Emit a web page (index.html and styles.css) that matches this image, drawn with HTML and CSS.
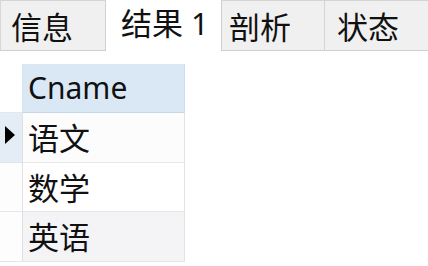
FILE: index.html
```html
<!DOCTYPE html>
<html lang="zh-CN">
<head>
<meta charset="utf-8">
<title>结果 1</title>
<link rel="stylesheet" href="styles.css">
</head>
<body>
<div class="tabs">
  <div class="tab tab-first">信息</div>
  <div class="tab tab-active">结果 1</div>
  <div class="tab tab-third">剖析</div>
  <div class="tab tab-last">状态</div>
</div>
<div class="grid">
  <div class="gutter gutter-head"></div>
  <div class="cell head">Cname</div>

  <div class="gutter gutter-current"><svg class="arrow" width="10" height="18" viewBox="0 0 10 18"><polygon points="0,0 10,9 0,18" fill="#000"/></svg></div>
  <div class="cell row-a">语文</div>

  <div class="gutter"></div>
  <div class="cell row-b">数学</div>

  <div class="gutter"></div>
  <div class="cell row-c">英语</div>
</div>
</body>
</html>
```

FILE: styles.css
```css
html, body {
  margin: 0;
  padding: 0;
  background: #ffffff;
}
body {
  font-family: "Noto Sans", "Noto Sans CJK SC", sans-serif;
  font-size: 31px;
  color: #111111;
  width: 428px;
  height: 266px;
  overflow: hidden;
}
.tabs {
  display: flex;
  height: 51px;
}
.tab {
  box-sizing: border-box;
  height: 51px;
  display: flex;
  align-items: center;
  padding-top: 4px;
  background: #f0f0f0;
  border-top: 1px solid #d4d4d4;
  border-bottom: 1px solid #cfcfcf;
  white-space: nowrap;
  line-height: 1;
}
.tab-first {
  width: 106px;
  padding-left: 10px;
  border-left: 1px solid #d8d8d8;
  border-right: 1px solid #cfcfcf;
}
.tab-active {
  width: 115px;
  padding-left: 15px;
  padding-top: 0;
  padding-bottom: 4px;
  background: #ffffff;
  border: none;
}
.tab-third {
  width: 104px;
  padding-left: 7px;
  border-left: 1px solid #cfcfcf;
  border-right: 1px solid #d4d4d4;
}
.tab-last {
  flex: 1;
  padding-left: 12px;
}
.grid {
  margin-top: 13px;
  display: grid;
  grid-template-columns: 22px 163px;
  grid-template-rows: 49px 50px 49px 50px;
  width: 186px;
}
.gutter {
  box-sizing: border-box;
  border-bottom: 1px solid #e6e6e6;
  background: #fdfdfd;
  display: flex;
  align-items: center;
}
.gutter-head {
  background: #ffffff;
  border-bottom: 1px solid #e2e8ee;
}
.gutter-current {
  background: #e4edf6;
  padding-left: 5px;
  padding-bottom: 6px;
}
.arrow {
  display: block;
  flex: none;
}
.cell {
  box-sizing: border-box;
  display: flex;
  align-items: center;
  padding-left: 5px;
  padding-top: 2px;
  border-left: 1px solid #e0e0e0;
  border-right: 1px solid #e3e3e3;
  border-bottom: 1px solid #e6e6e6;
  line-height: 1;
}
.head {
  font-size: 30px;
  padding-top: 0;
  background: #dae8f6;
  border-left: 1px solid #d6e3f0;
  border-right: 1px solid #cfdceb;
  border-bottom: 1px solid #c9d7e6;
}
.row-a {
  background: #fcfcfd;
}
.row-b {
  background: #ffffff;
}
.row-c {
  background: #f4f4f6;
}
```
